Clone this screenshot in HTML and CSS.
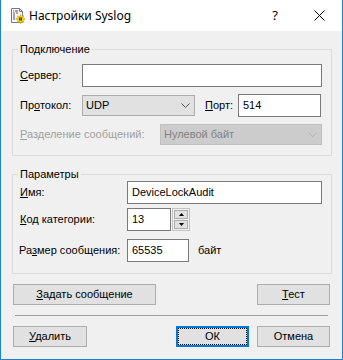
FILE: index.html
```html
<!DOCTYPE html>
<html lang="ru">
<head>
<meta charset="utf-8">
<title>Настройки Syslog</title>
<link rel="stylesheet" href="styles.css">
</head>
<body>
<div class="window">
  <div class="titlebar">
    <svg class="app-icon" width="16" height="16" viewBox="0 0 16 16">
      <path d="M1.5 0.5h8l3 3v11h-11z" fill="#fff" stroke="#7a7a7a"/>
      <path d="M9.5 0.5v3h3" fill="none" stroke="#7a7a7a"/>
      <path d="M3 3h1M5 3h3M3 7h2" stroke="#2040d0"/>
      <path d="M3 5h2M6 5h2" stroke="#d02020"/>
      <path d="M3 9h2M3 11h2" stroke="#2040d0"/>
      <circle cx="10.5" cy="11" r="3.6" fill="#f2d21e"/>
      <path d="M10.5 6.2v1.6M10.5 14.2v1.6M5.7 11h1.6M13.7 11h1.6M7.1 7.6l1.1 1.1M12.8 13.3l1.1 1.1M7.1 14.4l1.1-1.1M12.8 8.7l1.1-1.1" stroke="#c8b010" stroke-width="1.3"/>
      <rect x="9" y="9.5" width="3" height="3" fill="#3a3a10"/>
      <rect x="10" y="10.5" width="1" height="1" fill="#f2d21e"/>
    </svg>
    <span class="title">Настройки Syslog</span>
    <span class="help">?</span>
    <svg class="close" width="11" height="11" viewBox="0 0 11 11">
      <path d="M0.5 0.5l10 10M10.5 0.5l-10 10" stroke="#000" stroke-width="1"/>
    </svg>
  </div>

  <div class="content">
    <div class="group g1">
      <div class="group-title">Подключение</div>
      <div class="row">
        <span class="lbl lbl-a"><u>С</u>ервер:</span>
        <div class="edit edit-server"></div>
      </div>
      <div class="row row-gap7">
        <span class="lbl lbl-a">Пр<u>о</u>токол:</span>
        <div class="combo combo-proto">
          <span>UDP</span>
          <svg class="chev" width="9" height="5" viewBox="0 0 9 5"><path d="M0.5 0.5l4 4l4-4" fill="none" stroke="#555"/></svg>
        </div>
        <span class="lbl lbl-port"><u>П</u>орт:</span>
        <div class="edit edit-port">514</div>
      </div>
      <div class="row row-gap7 row-short">
        <span class="lbl lbl-split disabled"><u>Р</u>азделение сообщений:</span>
        <div class="combo combo-split is-disabled">
          <span>Нулевой байт</span>
          <svg class="chev" width="9" height="5" viewBox="0 0 9 5"><path d="M0.5 0.5l4 4l4-4" fill="none" stroke="#b4b4b4"/></svg>
        </div>
      </div>
    </div>

    <div class="group g2">
      <div class="group-title">Параметры</div>
      <div class="row">
        <span class="lbl lbl-b"><u>И</u>мя:</span>
        <div class="edit edit-name">DeviceLockAudit</div>
      </div>
      <div class="row row-gap4">
        <span class="lbl lbl-b"><u>К</u>од категории:</span>
        <div class="edit edit-code">13</div>
        <div class="spin">
          <div class="spin-btn"><svg width="5" height="3" viewBox="0 0 5 3"><path d="M2.5 0L5 3H0z" fill="#000"/></svg></div>
          <div class="spin-btn"><svg width="5" height="3" viewBox="0 0 5 3"><path d="M0 0h5L2.5 3z" fill="#000"/></svg></div>
        </div>
      </div>
      <div class="row row-gap8">
        <span class="lbl lbl-b lbl-size">Ра<u>з</u>мер сообщения:</span>
        <div class="edit edit-size">65535</div>
        <span class="unit">байт</span>
      </div>
    </div>

    <div class="btnrow btnrow-top">
      <div class="btn btn-msg"><span><u>З</u>адать сообщение</span></div>
      <div class="btn btn-std"><span><u>Т</u>ест</span></div>
    </div>

    <div class="sep"></div>

    <div class="btnrow btnrow-bottom">
      <div class="btn btn-del"><span><u>У</u>далить</span></div>
      <div class="btn btn-std btn-default btn-ok"><span>ОК</span></div>
      <div class="btn btn-std"><span>Отмена</span></div>
    </div>
  </div>
</div>
</body>
</html>
```

FILE: styles.css
```css
html, body {
  margin: 0;
  padding: 0;
  background: #fff;
}

body {
  font-family: "Liberation Sans", Arial, sans-serif;
  font-size: 11px;
  line-height: 15px;
  color: #000;
}

u {
  text-decoration: underline;
  text-underline-offset: 1px;
}

.window {
  width: 343px;
  height: 360px;
  box-sizing: border-box;
  border: 1px solid #1883d7;
  border-top: 0;
  background: #f0f0f0;
  display: flex;
  flex-direction: column;
  overflow: hidden;
}

/* Title bar */
.titlebar {
  flex: 0 0 31px;
  height: 31px;
  background: #fff;
  display: flex;
  align-items: center;
}

.app-icon {
  margin-left: 9px;
  flex: none;
}

.title {
  margin-left: 3px;
  font-family: "Noto Sans", "Liberation Sans", sans-serif;
  font-size: 12px;
}

.help {
  margin-left: auto;
  font-family: "Noto Sans", "Liberation Sans", sans-serif;
  font-size: 13px;
}

.close {
  margin-left: 36px;
  margin-right: 17px;
  flex: none;
}

/* Content */
.content {
  padding: 18px 10px 12px 11px;
  display: flex;
  flex-direction: column;
}

.group {
  border: 1px solid #dcdcdc;
  display: flex;
  flex-direction: column;
}

.g1 {
  padding: 0 9px 10px 7px;
}

.g2 {
  margin-top: 18px;
  padding: 0 9px 11px 7px;
}

.group-title {
  align-self: flex-start;
  height: 16px;
  line-height: 16px;
  padding: 0 2px;
  margin-left: -2px;
  margin-top: -9px;
  background: #f0f0f0;
}

.g1 .group-title {
  margin-bottom: 7px;
}

.g2 .group-title {
  margin-bottom: -1px;
}

.row {
  display: flex;
  align-items: center;
  height: 23px;
}

.row-short {
  height: 21px;
}

.row-gap7 { margin-top: 7px; }
.row-gap4 { margin-top: 4px; }
.row-gap8 { margin-top: 8px; }

.lbl {
  flex: none;
  white-space: nowrap;
}

.lbl-a { width: 62px; }
.lbl-b { width: 107px; }
.lbl-size { margin-left: -1px; width: 108px; }
.lbl-port { width: 33px; margin-left: 10px; }
.lbl-split { width: 140px; }

.disabled {
  color: #a0a0a0;
}

/* Edit boxes */
.edit {
  flex: none;
  height: 23px;
  box-sizing: border-box;
  border: 1px solid #7a7a7a;
  background: #fff;
  padding: 0 4px;
  display: flex;
  align-items: center;
  white-space: nowrap;
}

.edit-server { width: 240px; }
.edit-port { width: 83px; }
.edit-name { width: 195px; }
.edit-code { width: 44px; }
.edit-size { width: 62px; }

.unit {
  margin-left: 9px;
}

/* Combo boxes */
.combo {
  flex: none;
  height: 21px;
  box-sizing: border-box;
  border: 1px solid #adadad;
  background: #e1e1e1;
  padding: 0 4px 0 3px;
  display: flex;
  align-items: center;
  justify-content: space-between;
}

.combo-proto { width: 113px; }
.combo-split { width: 162px; }

.combo.is-disabled {
  background: #cccccc;
  border-color: #bfbfbf;
  color: #838383;
}

.chev {
  flex: none;
}

/* Spinner */
.spin {
  flex: none;
  width: 18px;
  height: 23px;
  box-sizing: border-box;
  border: 1px solid #c4c4c4;
  padding: 1px;
  margin-left: 1px;
  display: flex;
  flex-direction: column;
  gap: 1px;
}

.spin-btn {
  flex: 1;
  box-sizing: border-box;
  border: 1px solid #adadad;
  background: #e1e1e1;
  display: flex;
  align-items: center;
  justify-content: center;
}

.spin-btn svg {
  display: block;
}

/* Buttons */
.btnrow {
  display: flex;
  align-items: center;
}

.btnrow-top {
  margin-top: 10px;
  padding: 0 2px 0 1px;
  justify-content: space-between;
}

.btnrow-bottom {
  margin-top: 10px;
  padding: 0 2px 0 1px;
  gap: 8px;
}

.btn {
  flex: none;
  height: 21px;
  box-sizing: border-box;
  border: 1px solid #adadad;
  background: #e1e1e1;
  display: flex;
  align-items: center;
  justify-content: center;
  white-space: nowrap;
}

.btn-msg { width: 143px; }
.btn-std { width: 73px; }
.btn-del { width: 74px; }

.btn-ok {
  margin-left: auto;
}

.btn-default {
  border: 2px solid #0078d7;
  outline: 1px dotted #000;
  outline-offset: -3px;
}

.sep {
  height: 1px;
  background: #a0a0a0;
  margin: 10px 4px 0 3px;
}
```
